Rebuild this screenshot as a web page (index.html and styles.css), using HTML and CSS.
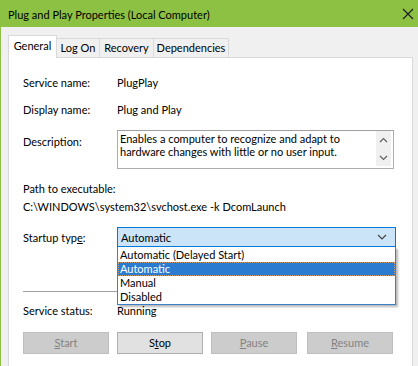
FILE: index.html
```html
<!DOCTYPE html>
<html>
<head>
<meta charset="utf-8">
<link rel="stylesheet" href="styles.css">
</head>
<body>
<div class="window">
  <div class="titlebar">
    <span class="title">Plug and Play Properties (Local Computer)</span>
    <svg class="close" width="12" height="12" viewBox="0 0 12 12"><path d="M1 1 L11 11 M11 1 L1 11" stroke="#1a1a1a" stroke-width="1.1" fill="none"/></svg>
  </div>
  <div class="content">
    <div class="tabs">
      <div class="tab selected">General</div>
      <div class="tab t-logon">Log On</div>
      <div class="tab t-recovery">Recovery</div>
      <div class="tab t-deps">Dependencies</div>
    </div>
    <div class="panel">
      <div class="row r-first"><span class="label">Service name:</span><span>PlugPlay</span></div>
      <div class="row r-display"><span class="label">Display name:</span><span>Plug and Play</span></div>
      <div class="row r-desc">
        <span class="label desc-label">Description:</span>
        <div class="textbox">
          <div class="tb-text">Enables a computer to recognize and adapt to hardware changes with little or no user input.</div>
          <div class="scroll">
            <svg width="9" height="6" viewBox="0 0 9 6"><path d="M1 5 L4.5 1.5 L8 5" stroke="#606060" stroke-width="1.2" fill="none"/></svg>
            <svg width="9" height="6" viewBox="0 0 9 6"><path d="M1 1 L4.5 4.5 L8 1" stroke="#606060" stroke-width="1.2" fill="none"/></svg>
          </div>
        </div>
      </div>
      <div class="row r-path"><span>Path to executable:</span></div>
      <div class="row r-pathval"><span>C:\WINDOWS\system32\svchost.exe -k DcomLaunch</span></div>
      <div class="row r-startup">
        <span class="label">Startup typ<u>e</u>:</span>
        <div class="combo-wrap">
          <div class="combo">
            <span>Automatic</span>
            <svg width="10" height="6" viewBox="0 0 10 6"><path d="M1 1 L5 5 L9 1" stroke="#404040" stroke-width="1.1" fill="none"/></svg>
          </div>
          <div class="list">
            <div class="item">Automatic (Delayed Start)</div>
            <div class="item hl">Automatic</div>
            <div class="item">Manual</div>
            <div class="item">Disabled</div>
          </div>
        </div>
      </div>
      <div class="sep"></div>
      <div class="row r-status"><span class="label">Service status:</span><span>Running</span></div>
      <div class="buttons">
        <div class="btn disabled"><u>S</u>tart</div>
        <div class="btn">S<u>t</u>op</div>
        <div class="btn disabled"><u>P</u>ause</div>
        <div class="btn disabled btn-last"><u>R</u>esume</div>
      </div>
    </div>
  </div>
</div>
</body>
</html>
```

FILE: styles.css
```css
html, body {
  margin: 0;
  padding: 0;
}
body {
  width: 418px;
  height: 366px;
  overflow: hidden;
  background: #f0f0f0;
  font-family: "Lato", "Noto Sans", sans-serif;
  font-size: 11px;
  color: #000;
}
.window {
  border-left: 1px solid #8dc143;
  height: 366px;
  box-sizing: border-box;
  overflow: hidden;
}
.titlebar {
  height: 27px;
  background: #8dc143;
  display: flex;
  align-items: center;
  padding-left: 7px;
  padding-right: 4px;
}
.title {
  font-size: 11px;
  color: #000;
  flex: 1;
  margin-top: 1px;
}
.close {
  margin-top: 1px;
}
.content {
  padding: 8px 5px 0 7px;
}
.tabs {
  display: flex;
  align-items: flex-end;
  height: 22px;
  position: relative;
  z-index: 2;
}
.tab {
  height: 19px;
  box-sizing: border-box;
  border: 1px solid #d9d9d9;
  border-bottom: none;
  border-left: none;
  background: #f0f0f0;
  line-height: 18px;
  text-align: center;
}
.tab.selected {
  height: 23px;
  margin-bottom: -1px;
  background: #fff;
  border: 1px solid #d9d9d9;
  border-bottom: none;
  width: 49px;
  line-height: 20px;
}
.t-logon { width: 43px; }
.t-recovery { width: 54px; }
.t-deps { width: 75px; }
.panel {
  background: #fff;
  border: 1px solid #d9d9d9;
  border-bottom: none;
  height: 309px;
  box-sizing: border-box;
  padding: 17px 18px 0 14px;
}
.row {
  display: flex;
  line-height: 15px;
}
.label {
  width: 94px;
  flex: none;
}
.r-display { margin-top: 12px; }
.r-desc { margin-top: 13px; align-items: flex-start; }
.desc-label { margin-top: 4px; }
.textbox {
  width: 279px;
  height: 39px;
  box-sizing: border-box;
  border: 1px solid #abadb3;
  border-top-color: #a0a0a0;
  display: flex;
}
.tb-text {
  flex: 1;
  padding: 1px 3px 0 2px;
  line-height: 13px;
}
.scroll {
  width: 15px;
  background: #f0f0f0;
  display: flex;
  flex-direction: column;
  justify-content: space-between;
  align-items: center;
  padding: 6px 0 5px;
  margin: 0 2px 2px 0;
}
.r-path { margin-top: 12px; }
.r-pathval { margin-top: 3px; }
.r-startup { margin-top: 13px; align-items: center; }
.combo-wrap {
  position: relative;
}
.combo {
  width: 279px;
  height: 20px;
  box-sizing: border-box;
  border: 1px solid #0078d7;
  background: #cce4f7;
  display: flex;
  align-items: center;
  justify-content: space-between;
  padding: 0 8px 0 3px;
}
.list {
  position: absolute;
  left: 0;
  top: 20px;
  width: 279px;
  box-sizing: border-box;
  background: #fff;
  border: 1px solid #3c7fc6;
  border-top: none;
  padding-top: 1px;
  box-shadow: 2px 2px 2px rgba(0,0,0,0.28);
  z-index: 5;
}
.item {
  height: 14px;
  line-height: 14px;
  padding-left: 2px;
}
.item.hl {
  background: #2b7bd0;
  color: #fff;
  outline: 1px dotted #c99a6a;
  outline-offset: -1px;
}
.sep {
  margin-top: 44px;
  height: 1px;
  background: #a0a0a0;
  width: 372px;
}
.r-status { margin-top: 11px; }
.buttons {
  display: flex;
  gap: 8px;
  margin-top: 14px;
}
.btn {
  width: 86px;
  height: 22px;
  box-sizing: border-box;
  border: 1px solid #adadad;
  background: #e1e1e1;
  text-align: center;
  line-height: 20px;
}
.btn.disabled {
  background: #cccccc;
  border-color: #bfbfbf;
  color: #838383;
}
.btn-last { margin-left: 2px; }
```
